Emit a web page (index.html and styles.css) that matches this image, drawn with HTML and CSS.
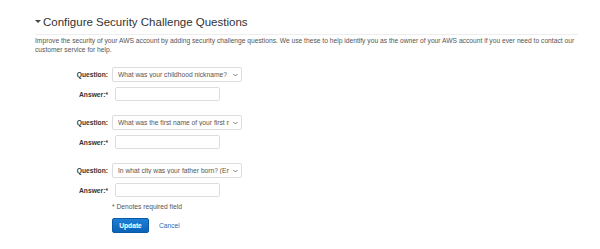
FILE: index.html
```html
<!DOCTYPE html>
<html lang="en">
<head>
    <meta charset="UTF-8">
    <meta name="viewport" content="width=device-width, initial-scale=1.0">
    <title>Configure Security Challenge Questions</title>
    <link rel="stylesheet" href="styles.css">
</head>
<body>

    <div class="page">
        <h2 class="section-title">
            <span class="caret"></span>Configure Security Challenge Questions
        </h2>
        <p class="intro">
            Improve the security of your AWS account by adding security challenge questions. We use these to help identify you as the owner of your AWS account if you ever need to contact our customer service for help.
        </p>

        <form class="questions">
            <div class="group">
                <label class="label">Question:</label>
                <span class="select-wrap">
                    <select class="select">
                        <option>What was your childhood nickname?</option>
                    </select>
                    <svg class="chevron" width="5" height="4" viewBox="0 0 5 4"><path d="M0.5 1 L2.5 3 L4.5 1" fill="none" stroke="#666" stroke-width="0.8"/></svg>
                </span>
                <label class="label">Answer:*</label>
                <input class="answer" type="text">
            </div>

            <div class="group">
                <label class="label">Question:</label>
                <span class="select-wrap">
                    <select class="select">
                        <option>What was the first name of your first manager?</option>
                    </select>
                    <svg class="chevron" width="5" height="4" viewBox="0 0 5 4"><path d="M0.5 1 L2.5 3 L4.5 1" fill="none" stroke="#666" stroke-width="0.8"/></svg>
                </span>
                <label class="label">Answer:*</label>
                <input class="answer" type="text">
            </div>

            <div class="group">
                <label class="label">Question:</label>
                <span class="select-wrap">
                    <select class="select">
                        <option>In what city was your father born? (Enter full name of city only)</option>
                    </select>
                    <svg class="chevron" width="5" height="4" viewBox="0 0 5 4"><path d="M0.5 1 L2.5 3 L4.5 1" fill="none" stroke="#666" stroke-width="0.8"/></svg>
                </span>
                <label class="label">Answer:*</label>
                <input class="answer" type="text">
            </div>

            <div class="footer">
                <p class="required">* Denotes required field</p>
                <div class="actions">
                    <button class="btn" type="button">Update</button>
                    <a class="cancel" href="#">Cancel</a>
                </div>
            </div>
        </form>
    </div>

</body>
</html>
```

FILE: styles.css
```css
body {
    font-family: "Liberation Sans", Arial, sans-serif;
    background-color: white;
    color: #444;
    margin: 0;
}
.page {
    padding: 0 22px 0 35px;
}
.section-title {
    margin: 15px 0 0;
    padding-bottom: 5px;
    font-size: 11.5px;
    line-height: 14px;
    font-weight: normal;
    color: #333;
    border-bottom: 1px solid #eee;
}
.caret {
    display: inline-block;
    width: 0;
    height: 0;
    border-left: 3px solid transparent;
    border-right: 3px solid transparent;
    border-top: 3.5px solid #444;
    margin-right: 2px;
    vertical-align: middle;
    position: relative;
    top: -1px;
}
.intro {
    margin: 2px 0 0;
    font-size: 6.7px;
    line-height: 8.5px;
    color: #555;
}
.questions {
    margin-top: 13px;
}
.group {
    display: grid;
    grid-template-columns: 73px auto;
    column-gap: 4px;
    row-gap: 5px;
    align-items: center;
    justify-content: start;
    margin-bottom: 14px;
}
.label {
    text-align: right;
    font-size: 6.7px;
    font-weight: bold;
    color: #333;
}
.select-wrap {
    position: relative;
    display: block;
    width: 130px;
}
.select {
    appearance: none;
    -webkit-appearance: none;
    display: block;
    width: 130px;
    height: 15px;
    padding: 0 12px 0 5px;
    border: 1px solid #ddd;
    border-radius: 2px;
    background-color: white;
    font-family: "Liberation Sans", Arial, sans-serif;
    font-size: 6.7px;
    color: #555;
}
.chevron {
    position: absolute;
    right: 4px;
    top: 6px;
}
.answer {
    display: block;
    width: 105px;
    height: 14px;
    margin-left: 3px;
    padding: 0;
    border: 1px solid #ddd;
    border-radius: 2px;
    box-sizing: border-box;
}
.footer {
    padding-left: 77px;
    margin-top: -8px;
}
.required {
    margin: 0;
    font-size: 6.7px;
    line-height: 8px;
    color: #555;
}
.actions {
    display: flex;
    align-items: center;
    gap: 10px;
    margin-top: 7px;
}
.btn {
    width: 37px;
    height: 15px;
    padding: 0;
    border: 1px solid #0a5aa5;
    border-radius: 2px;
    background: linear-gradient(#1e7fd6, #0b63b8);
    color: white;
    font-family: "Liberation Sans", Arial, sans-serif;
    font-size: 6.7px;
    font-weight: bold;
    cursor: pointer;
}
.cancel {
    color: #2a6db3;
    font-size: 6.7px;
    text-decoration: none;
}
```
